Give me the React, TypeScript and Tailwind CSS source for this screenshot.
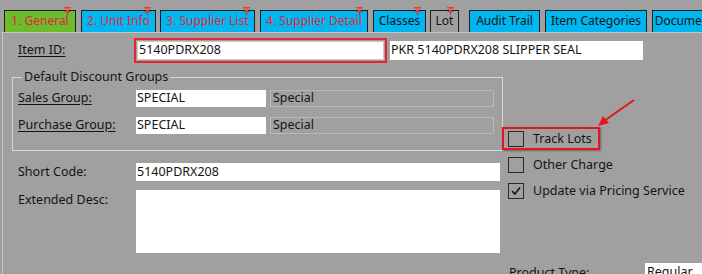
import React from "react";

const tabs = [
  { label: "1. General", w: 72, ml: 4, bg: "bg-[#6cbb2a]", red: true, pin: true },
  { label: "2. Unit Info", w: 75, ml: 5, bg: "bg-[#00b6f0]", red: true, pin: true },
  { label: "3. Supplier List", w: 95, ml: 4, bg: "bg-[#00b6f0]", red: true, pin: true },
  { label: "4. Supplier Detail", w: 108, ml: 5, bg: "bg-[#00b6f0]", red: true, pin: true },
  { label: "Classes", w: 53, ml: 5, bg: "bg-[#00b6f0]", red: false, pin: true },
  { label: "Lot", w: 29, ml: 4, bg: "bg-[#a0a0a0]", red: false, pin: true },
  { label: "Audit Trail", w: 71, ml: 10, bg: "bg-[#00b6f0]", red: false, pin: false },
  { label: "Item Categories", w: 102, ml: 5, bg: "bg-[#00b6f0]", red: false, pin: false },
  { label: "Documents", w: 70, ml: 5, bg: "bg-[#00b6f0]", red: false, pin: false },
];

function Pin() {
  return (
    <svg width="7" height="8" viewBox="0 0 7 8" className="absolute right-[4px] top-[-4px]">
      <rect x="0" y="0" width="7" height="1.5" fill="#e2403c" />
      <path d="M1.5 1.5 L5.5 1.5 L4.5 4 L2.5 4 Z" fill="#e85a4a" />
      <rect x="0.5" y="4" width="6" height="1.2" fill="#d83a36" />
      <rect x="3" y="5" width="1" height="3" fill="#c03030" />
    </svg>
  );
}

function Checkbox({ checked }: { checked?: boolean }) {
  return (
    <div className="w-[16px] h-[16px] border border-[#2a2a2a] flex items-center justify-center shrink-0">
      {checked && (
        <svg width="12" height="12" viewBox="0 0 12 12">
          <path d="M2 6.2 L4.8 9 L10 2.5" stroke="#1a1a1a" strokeWidth="1.8" fill="none" />
        </svg>
      )}
    </div>
  );
}

export default function App() {
  return (
    <div className="w-[702px] h-[274px] bg-[#a0a0a0] overflow-hidden relative font-['Noto_Sans',sans-serif] text-[12.5px] text-[#141414] leading-none">
      {/* Tabs */}
      <div className="flex pt-[10px] h-[32px] whitespace-nowrap">
        {tabs.map((t) => (
          <div
            key={t.label}
            style={{ width: t.w, marginLeft: t.ml }}
            className={`relative shrink-0 h-[22px] border border-[#1e1e1e] border-b-0 flex items-center justify-center text-[12px] ${t.bg} ${t.red ? "text-[#e2263c]" : "text-[#141414]"}`}
          >
            <span className="pb-[1px] shrink-0 whitespace-nowrap">{t.label}</span>
            {t.pin && <Pin />}
          </div>
        ))}
      </div>

      {/* Panel */}
      <div className="ml-[2px] h-[242px] border-l border-t border-[#c4c4c4]">
        {/* Item ID row */}
        <div className="flex items-center mt-[5px] h-[25px]">
          <div className="w-[131px] pl-[15px] underline underline-offset-2">Item ID:</div>
          <div className="w-[253px] h-[25px] border-2 border-[#e8242c] p-[1px]">
            <div className="h-full bg-white border border-[#c8c8c8] flex items-center pl-[1px]">5140PDRX208</div>
          </div>
          <div className="ml-[3px] w-[253px] h-[19px] bg-white flex items-center pl-[1px]">PKR 5140PDRX208 SLIPPER SEAL</div>
        </div>

        <div className="flex">
          {/* Left column */}
          <div className="ml-[9px] w-[491px] flex flex-col">
            <fieldset className="mt-[6px] border border-[#d8d8d8] h-[82px] pl-[5px] pr-[8px]">
              <legend className="ml-[4px] px-[2px] leading-[16px]">Default Discount Groups</legend>
              <div className="flex items-center h-[17px] mt-[5px]">
                <div className="w-[118px] underline underline-offset-2">Sales Group:</div>
                <div className="w-[130px] h-[17px] bg-white flex items-center pl-[1px]">SPECIAL</div>
                <div className="ml-[4px] w-[224px] h-[17px] border border-[#b8b8b8] flex items-center pl-[2px]">Special</div>
              </div>
              <div className="flex items-center h-[17px] mt-[10px]">
                <div className="w-[118px] underline underline-offset-2">Purchase Group:</div>
                <div className="w-[130px] h-[17px] bg-white flex items-center pl-[1px]">SPECIAL</div>
                <div className="ml-[4px] w-[224px] h-[17px] border border-[#b8b8b8] flex items-center pl-[2px]">Special</div>
              </div>
            </fieldset>
            <div className="flex items-center mt-[12px] h-[18px]">
              <div className="w-[124px] pl-[6px]">Short Code:</div>
              <div className="w-[364px] h-[18px] bg-white flex items-center pl-[1px]">5140PDRX208</div>
            </div>
            <div className="flex mt-[9px]">
              <div className="w-[124px] pl-[6px] pt-[4px]">Extended Desc:</div>
              <div className="w-[364px] h-[63px] bg-white" />
            </div>
          </div>

          {/* Right column */}
          <div className="ml-[5px] flex flex-col">
            <div className="relative flex items-center h-[16px] mt-[68px] gap-[9px]">
              <Checkbox />
              <span>Track Lots</span>
              <div className="absolute left-[-6px] top-[-4px] w-[98px] h-[23px] border-2 border-[#e8141c] shadow-[1px_1px_2px_rgba(0,0,0,0.35)]" />
            </div>
            <div className="flex items-center h-[16px] mt-[10px] gap-[9px]">
              <Checkbox />
              <span>Other Charge</span>
            </div>
            <div className="flex items-center h-[16px] mt-[10px] gap-[9px]">
              <Checkbox checked />
              <span>Update via Pricing Service</span>
            </div>
            <div className="flex items-start mt-[64px] h-[16px]">
              <div className="w-[137px] pl-[1px] pt-[4px]">Product Type:</div>
              <div className="w-[60px] h-[16px] bg-white pl-[2px] pt-[3px]">Regular</div>
            </div>
          </div>
        </div>
      </div>

      {/* Arrow annotation */}
      <svg className="absolute left-[590px] top-[95px]" width="50" height="40" viewBox="0 0 50 40">
        <line x1="44" y1="5" x2="14" y2="26" stroke="#e8141c" strokeWidth="2" />
        <path d="M8 31 L13 21 L19 28 Z" fill="#e8141c" />
      </svg>
    </div>
  );
}
